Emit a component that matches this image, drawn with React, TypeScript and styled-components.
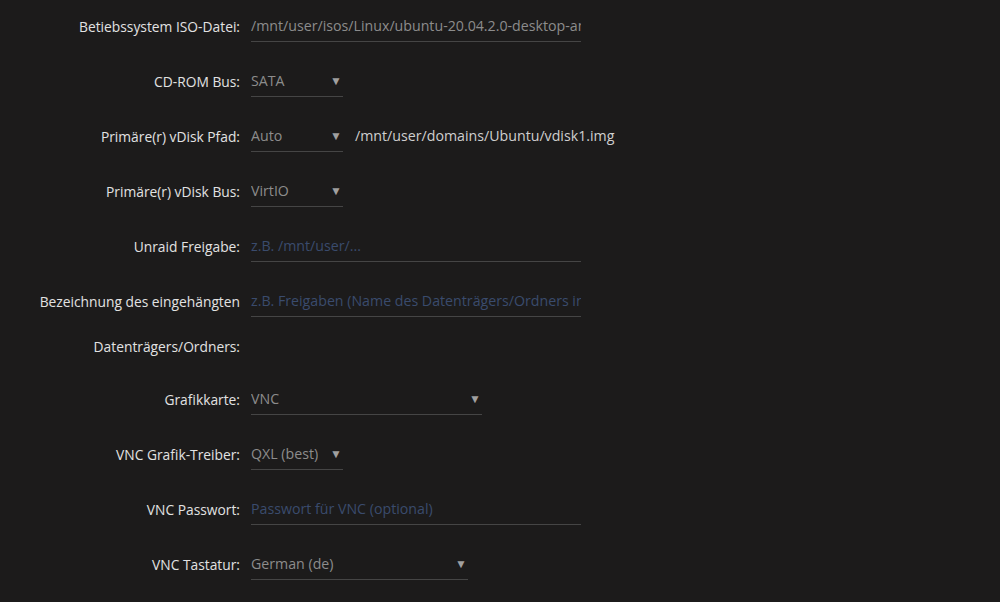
import React from "react";
import styled, { createGlobalStyle } from "styled-components";

const Global = createGlobalStyle`
  html, body { margin: 0; padding: 0; background: #1c1b1b; }
  body { font-family: "Open Sans", "Noto Sans", sans-serif; }
`;

const Form = styled.div`
  display: flex;
  flex-direction: column;
  margin-top: -1px;
`;

const Row = styled.div<{ $tight?: boolean }>`
  display: grid;
  grid-template-columns: 240px 1fr;
  column-gap: 11px;
  align-items: start;
  padding: 5px 0 ${(p) => (p.$tight ? "3px" : "5px")};
`;

const Label = styled.div`
  text-align: right;
  color: #e2e2e2;
  font-size: 13.8px;
  line-height: 45px;
  white-space: pre-line;
`;

const Content = styled.div`
  display: flex;
  align-items: flex-start;
  gap: 12px;
  height: 45px;
`;

const Field = styled.div<{ $w: number; $placeholder?: boolean }>`
  box-sizing: border-box;
  width: ${(p) => p.$w}px;
  height: 31px;
  margin-top: 7px;
  border-bottom: 1px solid #454545;
  color: ${(p) => (p.$placeholder ? "#3a4b6d" : "#8c8c8c")};
  font-size: 14.2px;
  line-height: 30px;
  white-space: nowrap;
  overflow: hidden;
  display: flex;
  align-items: center;
  justify-content: space-between;
`;

const Value = styled.span`
  overflow: hidden;
`;

const Arrow = styled.span`
  color: #a0a0a0;
  font-size: 12px;
  padding-right: 1px;
  flex: none;
`;

const Extra = styled.span`
  color: #cfcfcf;
  font-size: 14.2px;
  line-height: 30px;
  margin-top: 7px;
`;

type RowDef = {
  label: string;
  value: string;
  width: number;
  select?: boolean;
  placeholder?: boolean;
  extra?: string;
};

const rows: RowDef[] = [
  { label: "Betiebssystem ISO-Datei:", value: "/mnt/user/isos/Linux/ubuntu-20.04.2.0-desktop-amd64.iso", width: 330 },
  { label: "CD-ROM Bus:", value: "SATA", width: 92, select: true },
  { label: "Primäre(r) vDisk Pfad:", value: "Auto", width: 92, select: true, extra: "/mnt/user/domains/Ubuntu/vdisk1.img" },
  { label: "Primäre(r) vDisk Bus:", value: "VirtIO", width: 92, select: true },
  { label: "Unraid Freigabe:", value: "z.B. /mnt/user/...", width: 330, placeholder: true },
  { label: "Bezeichnung des eingehängten\nDatenträgers/Ordners:", value: "z.B. Freigaben (Name des Datenträgers/Ordners innerhalb der VM)", width: 330, placeholder: true },
  { label: "Grafikkarte:", value: "VNC", width: 231, select: true },
  { label: "VNC Grafik-Treiber:", value: "QXL (best)", width: 92, select: true },
  { label: "VNC Passwort:", value: "Passwort für VNC (optional)", width: 330, placeholder: true },
  { label: "VNC Tastatur:", value: "German (de)", width: 217, select: true },
];

export default function App() {
  return (
    <>
      <Global />
      <Form>
        {rows.map((r) => (
          <Row key={r.label} $tight={r.label.includes("\n")}>
            <Label>{r.label}</Label>
            <Content>
              <Field $w={r.width} $placeholder={r.placeholder}>
                <Value>{r.value}</Value>
                {r.select && <Arrow>▼</Arrow>}
              </Field>
              {r.extra && <Extra>{r.extra}</Extra>}
            </Content>
          </Row>
        ))}
      </Form>
    </>
  );
}
